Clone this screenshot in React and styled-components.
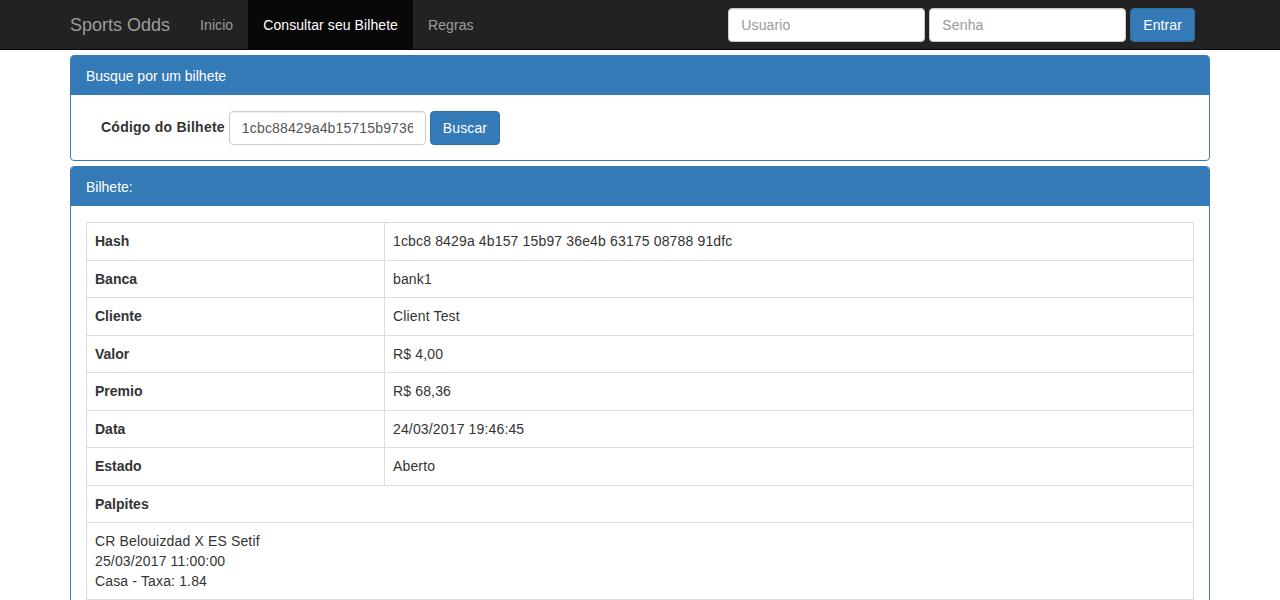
import React from 'react'
import styled, { createGlobalStyle } from 'styled-components'

const GlobalStyle = createGlobalStyle`
    * { box-sizing: border-box; }
    body {
        margin: 0;
        font-family: "Liberation Sans", Arial, sans-serif;
        font-size: 14px;
        line-height: 1.42857;
        color: #333;
        background: #fff;
    }
`

const rows = [
    ['Hash', '1cbc8 8429a 4b157 15b97 36e4b 63175 08788 91dfc'],
    ['Banca', 'bank1'],
    ['Cliente', 'Client Test'],
    ['Valor', 'R$ 4,00'],
    ['Premio', 'R$ 68,36'],
    ['Data', '24/03/2017 19:46:45'],
    ['Estado', 'Aberto'],
]

export default function App() {
    return (
        <>
            <GlobalStyle />
            <Navbar>
                <NavInner>
                    <Brand>Sports Odds</Brand>
                    <NavLink>Inicio</NavLink>
                    <NavLink active>Consultar seu Bilhete</NavLink>
                    <NavLink>Regras</NavLink>
                    <LoginForm>
                        <Input placeholder="Usuario" />
                        <Input placeholder="Senha" type="password" />
                        <Button>Entrar</Button>
                    </LoginForm>
                </NavInner>
            </Navbar>
            <Container>
                <Panel>
                    <PanelHeading>Busque por um bilhete</PanelHeading>
                    <PanelBody>
                        <SearchRow>
                            <Label>Código do Bilhete</Label>
                            <Input defaultValue="1cbc88429a4b15715b9736e4b631750878891dfc" />
                            <Button>Buscar</Button>
                        </SearchRow>
                    </PanelBody>
                </Panel>
                <Panel>
                    <PanelHeading>Bilhete:</PanelHeading>
                    <PanelBody>
                        <Table>
                            <tbody>
                                {rows.map(([k, v]) => (
                                    <Row key={k}>
                                        <Th>{k}</Th>
                                        <Td>{v}</Td>
                                    </Row>
                                ))}
                                <Row>
                                    <Th colSpan={2}>Palpites</Th>
                                </Row>
                                <tr>
                                    <Td colSpan={2}>
                                        CR Belouizdad X ES Setif<br />
                                        25/03/2017 11:00:00<br />
                                        Casa - Taxa: 1.84
                                    </Td>
                                </tr>
                            </tbody>
                        </Table>
                    </PanelBody>
                </Panel>
            </Container>
        </>
    )
}

const Navbar = styled.nav`
    height: 50px;
    background: #222;
    border-bottom: 1px solid #080808;
`

const NavInner = styled.div`
    width: 1170px;
    margin: 0 auto;
    display: flex;
    align-items: stretch;
    height: 49px;
`

const Brand = styled.a`
    padding: 15px;
    font-size: 18px;
    line-height: 20px;
    color: #9d9d9d;
`

const NavLink = styled.a`
    padding: 15px;
    line-height: 20px;
    letter-spacing: 0.08px;
    color: ${p => (p.active ? '#fff' : '#9d9d9d')};
    background: ${p => (p.active ? '#080808' : 'transparent')};
`

const LoginForm = styled.div`
    margin-left: auto;
    padding-right: 30px;
    display: flex;
    align-items: center;
    gap: 4px;
`

const Input = styled.input`
    height: 34px;
    width: 197px;
    padding: 6px 12px;
    font-family: inherit;
    font-size: 14px;
    line-height: 20px;
    letter-spacing: 0.15px;
    color: #555;
    background: #fff;
    border: 1px solid #ccc;
    border-radius: 4px;
    box-shadow: inset 0 1px 1px rgba(0, 0, 0, 0.075);
    outline: none;

    &::placeholder {
        color: #999;
    }
`

const Button = styled.button`
    height: 34px;
    padding: 6px 12px;
    font-family: inherit;
    font-size: 14px;
    line-height: 20px;
    letter-spacing: 0.1px;
    color: #fff;
    background: #337ab7;
    border: 1px solid #2e6da4;
    border-radius: 4px;
`

const Container = styled.div`
    width: 1170px;
    margin: 5px auto 0;
    padding: 0 15px;
    display: flex;
    flex-direction: column;
    gap: 5px;
`

const Panel = styled.div`
    border: 1px solid #337ab7;
    border-radius: 4px;
    background: #fff;
`

const PanelHeading = styled.div`
    padding: 10px 15px 9px;
    background: #337ab7;
    color: #fff;
    line-height: 20px;
    border-radius: 3px 3px 0 0;
`

const PanelBody = styled.div`
    padding: 15px;
`

const SearchRow = styled.div`
    display: flex;
    align-items: center;
    gap: 4px;
    padding-left: 15px;
    padding-top: 1px;
`

const Label = styled.label`
    font-weight: bold;
    letter-spacing: 0.24px;
`

const Table = styled.table`
    width: 100%;
    border-collapse: collapse;
    border: 1px solid #ddd;
    margin-top: 1px;
`

const Row = styled.tr`
    height: 37.5px;
`

const Th = styled.th`
    width: 298px;
    padding: 8px;
    text-align: left;
    border: 1px solid #ddd;
    line-height: 20px;
    vertical-align: middle;
`

const Td = styled.td`
    padding: 8px;
    border: 1px solid #ddd;
    line-height: 20px;
    letter-spacing: 0.15px;
    vertical-align: middle;
`
